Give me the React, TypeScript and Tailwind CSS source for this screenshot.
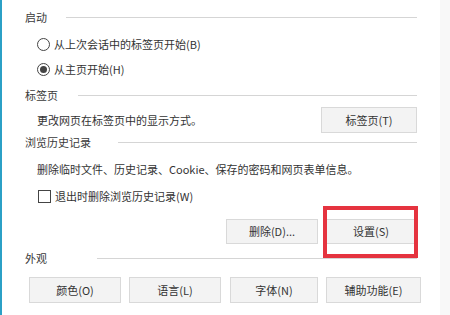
import React from 'react';

const font = { fontFamily: '"Microsoft YaHei", "Noto Sans CJK SC", "Noto Sans", sans-serif' };

function Heading({ label, gap }: { label: string; gap: string }) {
  return (
    <div className="flex items-center h-[24px]">
      <span className="text-[11px] text-[#3a3a3a] leading-none">{label}</span>
      <div className={`flex-1 h-px bg-[#d5d5d5] ${gap}`} />
    </div>
  );
}

function Btn({ children, className = '' }: { children: React.ReactNode; className?: string }) {
  return (
    <button className={`h-[25px] bg-[#f3f3f3] border border-[#d9d9d9] text-[11px] text-[#333] leading-none flex items-center justify-center ${className}`}>
      {children}
    </button>
  );
}

function Radio({ checked, label }: { checked?: boolean; label: string }) {
  return (
    <label className="flex items-center gap-[4px] ml-[12px] text-[11px] text-[#333] leading-none">
      <span className="w-[13px] h-[13px] rounded-full border border-[#444] bg-white flex items-center justify-center">
        {checked && <span className="w-[7px] h-[7px] rounded-full bg-[#444]" />}
      </span>
      {label}
    </label>
  );
}

export default function App() {
  return (
    <div className="w-[450px] h-[315px] flex bg-white overflow-hidden" style={font}>
      <div className="w-[2px] bg-[#2ba0c6]" />
      <div className="flex-1 flex flex-col pl-[23px] pr-[23px] pt-[5px]">
        <Heading label="启动" gap="ml-[19px]" />
        <div className="h-[30px] flex items-center">
          <Radio label="从上次会话中的标签页开始(B)" />
        </div>
        <div className="h-[20px] flex items-center">
          <Radio checked label="从主页开始(H)" />
        </div>
        <div className="h-[4px]" />
        <Heading label="标签页" gap="ml-[20px]" />
        <div className="h-[26px] flex items-center justify-between">
          <span className="ml-[12px] text-[11px] text-[#333] leading-none">更改网页在标签页中的显示方式。</span>
          <Btn className="w-[96px] h-[26px]">标签页(T)</Btn>
        </div>
        <div className="h-[18px] flex items-center">
          <span className="text-[11px] text-[#3a3a3a] leading-none">浏览历史记录</span>
          <div className="flex-1 h-px bg-[#d5d5d5] ml-[27px]" />
        </div>
        <div className="h-[36px] flex items-center">
          <span className="ml-[12px] text-[11px] text-[#333] leading-none">删除临时文件、历史记录、Cookie、保存的密码和网页表单信息。</span>
        </div>
        <div className="h-[18px] flex items-center">
          <label className="flex items-center gap-[4px] ml-[13px] text-[11px] text-[#333] leading-none">
            <span className="w-[13px] h-[13px] border border-[#444] bg-white" />
            退出时删除浏览历史记录(W)
          </label>
        </div>
        <div className="flex justify-end gap-[7px] pt-[14px]">
          <Btn className="w-[92px]">删除(D)...</Btn>
          <div className="relative">
            <Btn className="w-[92px]">设置(S)</Btn>
            <div className="absolute left-[-2px] right-[-1px] top-[-13px] bottom-[-14px] border-[4px] border-[#e5333f]" />
          </div>
        </div>
        <div className="h-[2px]" />
        <Heading label="外观" gap="ml-[50px]" />
        <div className="flex pt-[7px] ml-[4px] mr-[-4px]">
          <Btn className="w-[92px] h-[26px]">颜色(O)</Btn>
          <Btn className="w-[92px] h-[26px] ml-[8px]">语言(L)</Btn>
          <Btn className="w-[88px] h-[26px] ml-[9px]">字体(N)</Btn>
          <Btn className="w-[95px] h-[26px] ml-[8px]">辅助功能(E)</Btn>
        </div>
      </div>
      <div className="w-[10px] bg-[#f8f8f8]" />
    </div>
  );
}
